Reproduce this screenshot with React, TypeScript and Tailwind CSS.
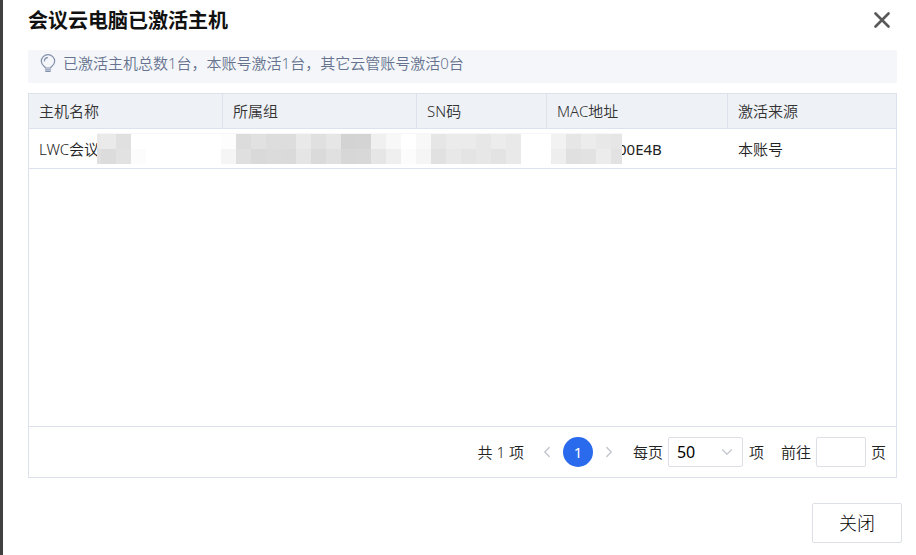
import { useState } from "react";
import { ChevronDown, ChevronLeft, ChevronRight } from "lucide-react";

const COLUMNS: { key: string; label: string; width: string }[] = [
  { key: "name",   label: "主机名称", width: "w-[194px]" },
  { key: "group",  label: "所属组",   width: "w-[194px]" },
  { key: "sn",     label: "SN码",     width: "w-[130px]" },
  { key: "mac",    label: "MAC地址",  width: "w-[181px]" },
  { key: "source", label: "激活来源", width: "" },
];

// Grey levels of the redaction mosaic, left to right
const MASK_TILES = [
  [
    "e8", "ea", "e0", "ff", "ff", "ff", "ff", "ff", "ff", "fd", "dc", "e1", "dd", "dd", "e9", "e0", "e6", "d3", "d4",
    "f0", "f8", "ff", "f8", "e6", "eb", "eb", "e7", "ec", "e9", "ff", "ff", "f2", "e6", "ec", "e8", "e6",
  ],
  [
    "e0", "dc", "e2", "fc", "ff", "ff", "ff", "ff", "ff", "f5", "df", "d9", "db", "da", "e5", "da", "e0", "d7", "d8",
    "e6", "ef", "fc", "f5", "e1", "e8", "e4", "e7", "e3", "e9", "ff", "ff", "ee", "e0", "e2", "ec", "e2",
  ],
];

const Mask = () => (
  <div aria-hidden="true" className="absolute left-[68px] top-[39px] w-[525px] border-t border-[#f7f7f7] overflow-hidden">
    {MASK_TILES.map((row, r) => (
      <div key={r} className="flex h-[15px]">
        {row.map((level, i) => (
          <div
            key={i}
            className={i === 0 ? "w-1 shrink-0" : "w-[15px] shrink-0"}
            style={{ backgroundColor: `#${level.repeat(3)}` }}
          />
        ))}
      </div>
    ))}
  </div>
);

const BulbIcon = () => (
  <svg width="16" height="20" viewBox="0 0 16 20" fill="none" stroke="#8290ab" strokeWidth="1.2" strokeLinecap="round">
    <path d="M5.6 15C5.3 13.6 1.3 12.2 1.3 8.2a6.7 6.5 0 0 1 13.4 0c0 4-4 5.4-4.3 6.8z" />
    <path d="M4.3 7.8a3.7 3.7 0 0 1 3.2-3.1M5.4 16.8h5.2M5.8 18.5h4.4" />
  </svg>
);

const App = () => {
  const [pageSize, setPageSize] = useState("50");
  const [target, setTarget]     = useState("");

  return (
    <div className="min-h-screen border-l-3 border-[#404040] bg-white pl-[25px] font-['Noto_Sans','Noto_Sans_CJK_SC',sans-serif] text-[15px] font-[350] text-[#222222]">

      {/* Header */}
      <div className="flex h-10 items-center justify-between pr-[26px]">
        <h1 className="pt-0.5 text-xl font-bold text-[#111111]">会议云电脑已激活主机</h1>
        <button type="button" aria-label="关闭窗口">
          <svg width="16" height="16" viewBox="0 0 16 16" stroke="#595959" strokeWidth="2.6" strokeLinecap="round">
            <path d="M1.5 1.5l13 13M14.5 1.5l-13 13" />
          </svg>
        </button>
      </div>

      <div className="mr-[19px]">
        {/* Summary */}
        <div className="mt-[10px] flex h-[33px] items-start rounded-xs bg-[#f4f6fa] pl-3 pt-[3px] text-[#66738f]">
          <BulbIcon />
          <p className="ml-[7px] leading-5">已激活主机总数1台，本账号激活1台，其它云管账号激活0台</p>
        </div>

        {/* Hosts */}
        <div className="mt-[10px] border border-[#dce1eb]">
          <div className="relative min-h-[332px]">
            <table className="w-full table-fixed border-separate border-spacing-0 text-left">
              <thead>
                <tr className="h-[35px] bg-[#eef1f6] text-[#333333]">
                  {COLUMNS.map(({ key, label, width }) => (
                    <th
                      key={key}
                      className={`${width} border-b border-r border-[#dce1eb] px-[10px] font-[350] last:border-r-0`}
                    >
                      {label}
                    </th>
                  ))}
                </tr>
              </thead>
              <tbody>
                <tr className="h-10 *:border-b *:border-[#dce1eb] *:px-[10px] *:pt-0.5">
                  <td>LWC会议</td>
                  <td />
                  <td />
                  <td className="font-normal"><span className="pl-[61px]">00E4B</span></td>
                  <td>本账号</td>
                </tr>
              </tbody>
            </table>
            <Mask />
          </div>

          {/* Pagination */}
          <div className="flex h-[51px] items-center justify-end border-t border-[#dce1eb] pr-[10px]">
            <span>共 1 项</span>
            <button type="button" aria-label="上一页" className="ml-[14px] text-[#c0c4cc]">
              <ChevronLeft size={18} strokeWidth={1.8} />
            </button>
            <button type="button" className="ml-[7px] size-[30px] rounded-full bg-[#2a6aec] font-normal text-white">1</button>
            <button type="button" aria-label="下一页" className="ml-[7px] text-[#c0c4cc]">
              <ChevronRight size={18} strokeWidth={1.8} />
            </button>
            <label htmlFor="page-size" className="ml-[15px]">每页</label>
            <div className="relative ml-[5px]">
              <select
                id="page-size"
                value={pageSize}
                onChange={(e) => setPageSize(e.target.value)}
                className="h-[30px] w-[75px] appearance-none rounded-xs border border-[#dcdfe6] bg-white pl-2 text-base font-normal text-black outline-none"
              >
                <option>20</option>
                <option>50</option>
                <option>100</option>
              </select>
              <ChevronDown size={18} strokeWidth={1.5} className="pointer-events-none absolute right-[7px] top-[6px] text-[#c0c4cc]" />
            </div>
            <span className="ml-[6px]">项</span>
            <label htmlFor="page-target" className="ml-[17px]">前往</label>
            <input
              id="page-target"
              value={target}
              onChange={(e) => setTarget(e.target.value)}
              className="ml-[5px] h-[30px] w-[50px] rounded-xs border border-[#dcdfe6] px-2 text-center outline-none"
            />
            <span className="ml-[5px]">页</span>
          </div>
        </div>
      </div>

      {/* Footer */}
      <div className="mt-[25px] flex justify-end pr-[14px]">
        <button type="button" className="h-10 w-[90px] rounded-xs border border-[#dcdfe6] text-lg font-light text-black">
          关闭
        </button>
      </div>
    </div>
  );
};

export default App;
